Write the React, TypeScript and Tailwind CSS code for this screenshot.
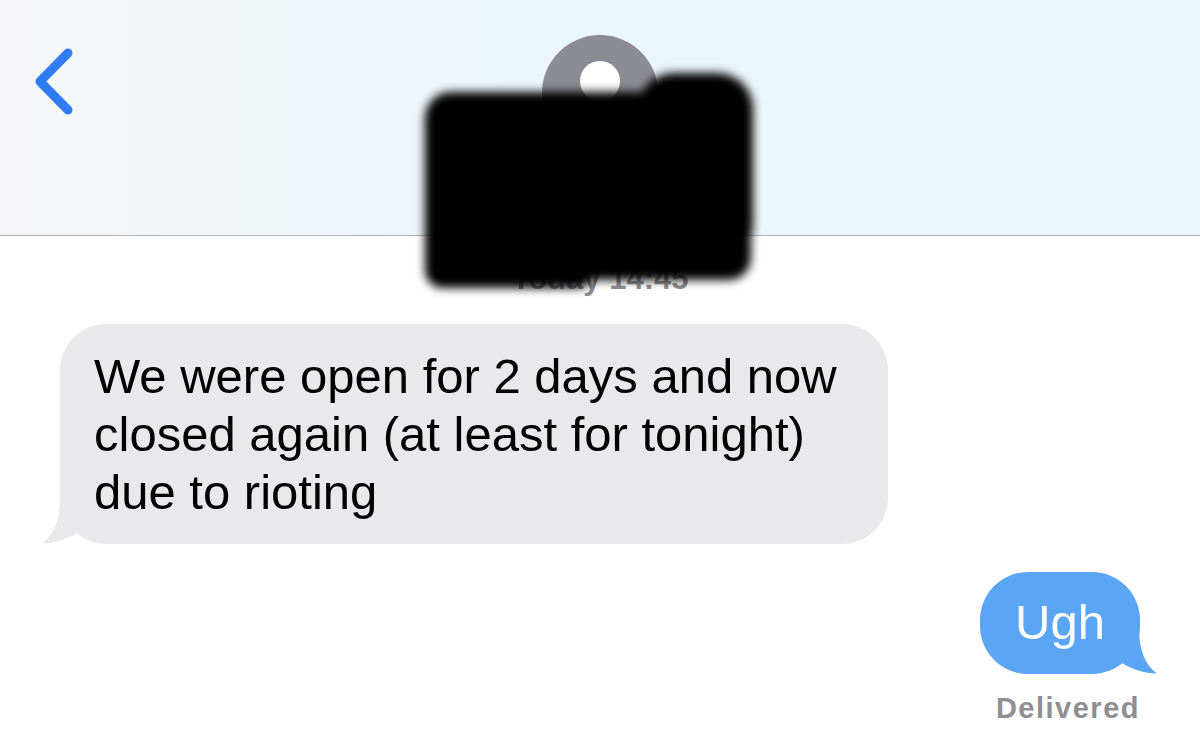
import React from "react";

const BubbleTail = ({ color, flip }: { color: string; flip?: boolean }) => (
  <svg
    width="42"
    height="46"
    viewBox="0 0 42 46"
    className={
      flip
        ? "absolute -right-[17px] bottom-0 -scale-x-100"
        : "absolute -left-[18px] bottom-0"
    }
  >
    <path d="M18 0 C18 22 12 37 0 45.5 C14 45.5 30 40 42 30 L42 0 Z" fill={color} />
  </svg>
);

const Avatar = () => (
  <div className="mt-[35px] h-[116px] w-[116px] overflow-hidden rounded-full bg-[#8c8c94]">
    <svg width="116" height="116" viewBox="0 0 116 116">
      <circle cx="58" cy="46" r="20" fill="#ffffff" />
      <path d="M22 104 C26 82 42 72 58 72 C74 72 90 82 94 104 Z" fill="#ffffff" />
    </svg>
  </div>
);

// blurred black marker over the contact name
const Redaction = () => (
  <div className="absolute left-[423px] top-[72px] h-[218px] w-[332px] blur-[5px]">
    <div className="absolute left-[2px] top-[20px] h-[160px] w-[328px] rounded-[26px] bg-black" />
    <div className="absolute left-[215px] top-[1px] h-[100px] w-[115px] rounded-[36px] bg-black" />
    <div className="absolute left-[2px] top-[120px] h-[88px] w-[326px] rounded-[22px] bg-black" />
    <div className="absolute left-[2px] top-[150px] h-[66px] w-[170px] rounded-[18px] bg-black" />
  </div>
);

const App = () => {
  return (
    <div className="relative h-[752px] w-[1200px] overflow-hidden bg-white font-['Liberation_Sans',Arial,sans-serif]">
      <header className="grid h-[236px] grid-cols-[1fr_auto_1fr] border-b border-[#b4b4b8] bg-linear-to-r from-[#f6f6f8] via-[#ebf6fa] to-[#eef8fc]">
        <div className="pl-[30px] pt-[45px]">
          <svg width="48" height="74" viewBox="0 0 48 74">
            <path
              d="M38 8 L10 36.5 L38 65"
              fill="none"
              stroke="#2f7cf6"
              strokeWidth="9"
              strokeLinecap="round"
              strokeLinejoin="round"
            />
          </svg>
        </div>
        <Avatar />
        <div />
      </header>

      <main className="flex flex-col">
        <div className="mt-[25px] text-center text-[31px] leading-[36px] font-semibold text-[#8e8e93]">
          Today 14:45
        </div>

        <div className="relative ml-[60px] mt-[27px] w-[828px] rounded-[46px] bg-[#e9e9eb] pb-[23px] pl-[34px] pt-[23px] text-[49px] leading-[58px] text-black">
          <BubbleTail color="#e9e9eb" />
          <p className="relative">
            We were open for 2 days and now
            <br />
            closed again (at least for tonight)
            <br />
            due to rioting
          </p>
        </div>

        <div className="relative mr-[60px] mt-[28px] w-[160px] self-end rounded-[48px] bg-[#5aa5f4] pb-[23px] pt-[21px] text-center text-[49px] leading-[58px] text-white">
          <BubbleTail color="#5aa5f4" flip />
          <span className="relative">Ugh</span>
        </div>

        <div className="mr-[60px] mt-[18px] self-end text-[29px] leading-[32px] font-bold tracking-[1.5px] text-[#8e8e93]">
          Delivered
        </div>
      </main>

      <Redaction />
    </div>
  );
};

export default App;
